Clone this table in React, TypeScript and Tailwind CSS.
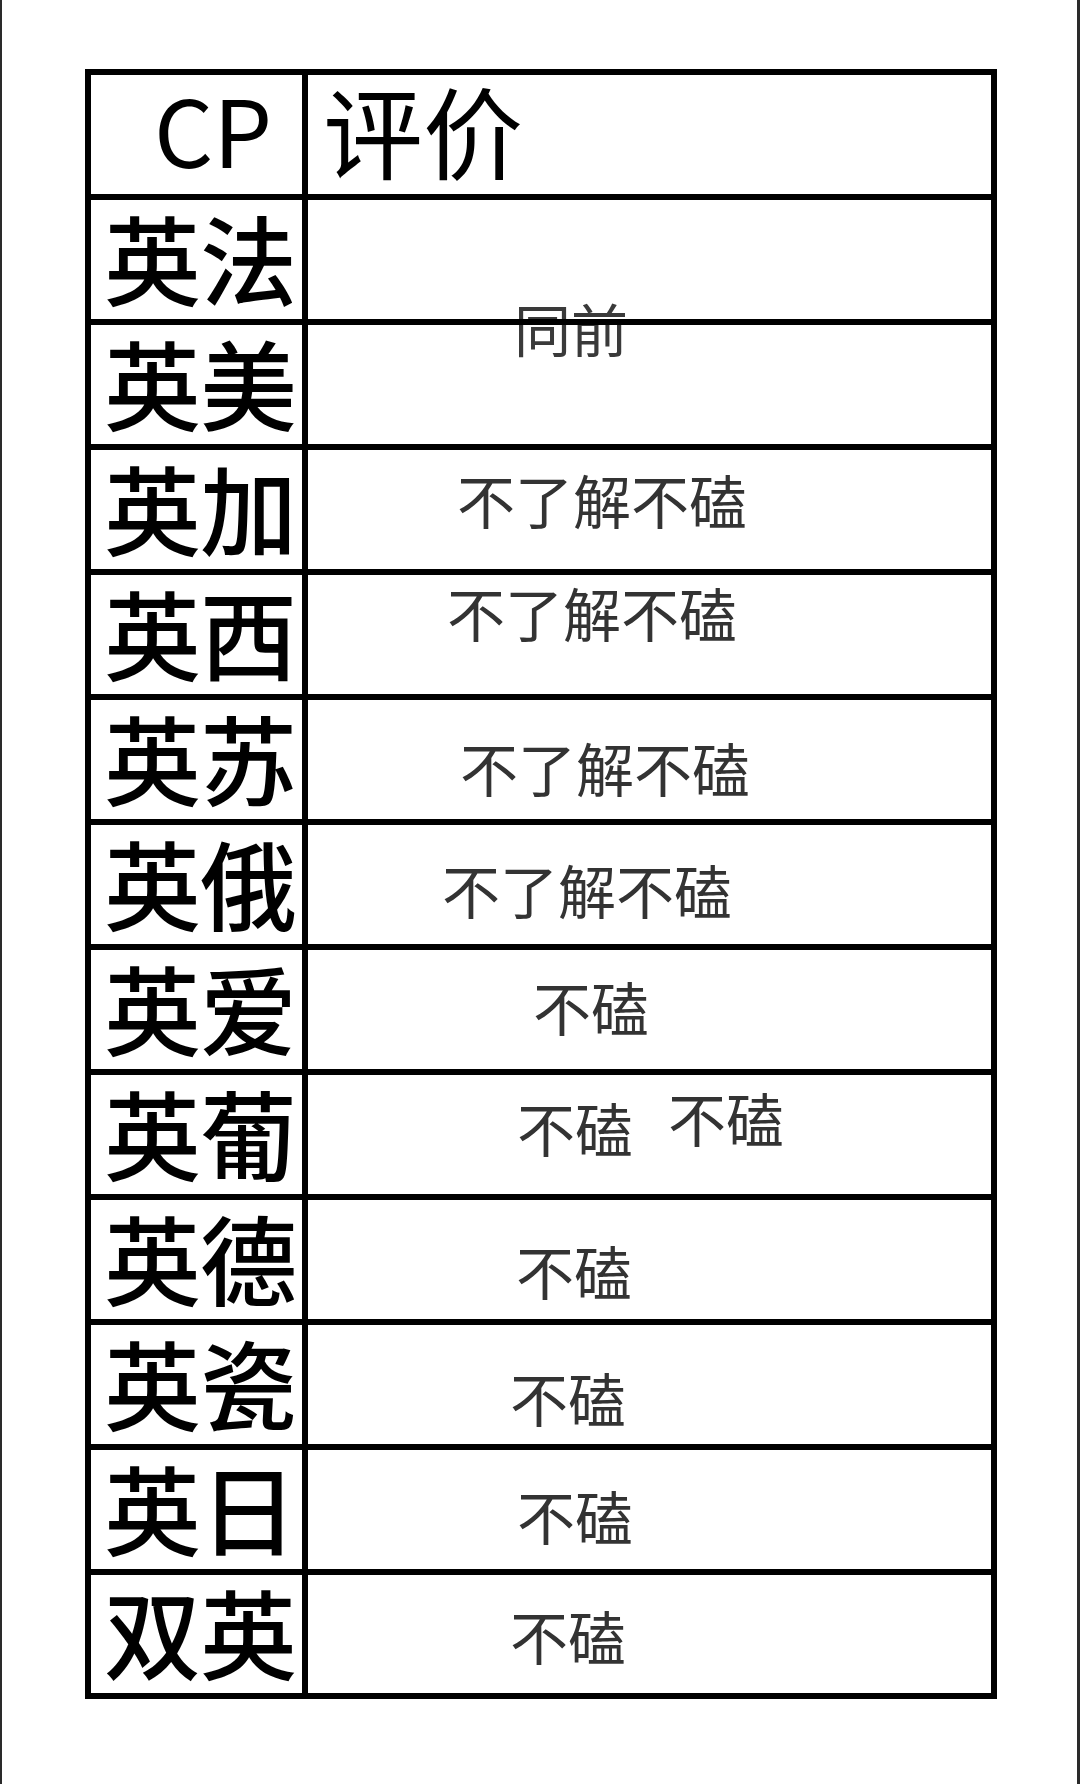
const cjk = "font-['Noto_Sans_CJK_SC','Noto_Sans_CJK_JP',sans-serif]"

type Row = {
  cp: string
  note?: string
  pad?: string
}

// padding per row, the notes sit wherever they were typed in the original
const rows: Row[] = [
  { cp: '英法' },
  { cp: '英美' },
  { cp: '英加', note: '不了解不磕', pad: 'pl-[149px] pt-[20px]' },
  { cp: '英西', note: '不了解不磕', pad: 'pl-[139px] pt-[8px]' },
  { cp: '英苏', note: '不了解不磕', pad: 'pl-[152px] pt-[38px]' },
  { cp: '英俄', note: '不了解不磕', pad: 'pl-[134px] pt-[35px]' },
  { cp: '英爱', note: '不磕', pad: 'pl-[225px] pt-[27px]' },
  { cp: '英葡' },
  { cp: '英德', note: '不磕', pad: 'pl-[208px] pt-[41px]' },
  { cp: '英瓷', note: '不磕', pad: 'pl-[202px] pt-[43px]' },
  { cp: '英日', note: '不磕', pad: 'pl-[209px] pt-[36px]' },
  { cp: '双英', note: '不磕', pad: 'pl-[202px] pt-[31px]' },
]

function Note({ text, className = '' }: { text: string; className?: string }) {
  return <span className={`block text-[58px] leading-none text-[#333] whitespace-nowrap ${className}`}>{text}</span>
}

export default function App() {
  return (
    <div className={`w-[1080px] min-h-[1784px] bg-white border-l-2 border-r-[3px] border-[#2a2a2a] pt-[69px] pl-[83px] ${cjk}`}>
      <div className="relative z-0 w-[912px] border-[6px] border-black bg-white flex flex-col">
        {/* header */}
        <div className="flex h-[125px] border-b-[6px] border-black">
          <div className="w-[217px] border-r-[6px] border-black pl-[63px] pt-[6px]">
            <span className="block text-[93px] leading-none text-black">CP</span>
          </div>
          <div className="flex-1 pl-[15px] pt-[4px]">
            <span className="block text-[100px] leading-none text-black">评价</span>
          </div>
        </div>

        {rows.map((r, i) => {
          const last = i === rows.length - 1
          return (
            <div key={r.cp} className={last ? 'flex h-[118px]' : 'flex h-[125px] border-b-[6px] border-black'}>
              <div className="w-[217px] border-r-[6px] border-black flex items-center pl-[13px] pb-[9px]">
                <span className="block text-[97px] leading-none font-medium tracking-[-1px] text-black whitespace-nowrap">{r.cp}</span>
              </div>
              {r.cp === '英葡' ? (
                <div className="flex-1 flex items-start pl-[209px]">
                  <Note text="不磕" className="mt-[23px]" />
                  <Note text="不磕" className="mt-[13px] ml-[35px]" />
                </div>
              ) : (
                <div className={`flex-1 flex items-start ${r.pad ?? ''}`}>
                  {r.note && <Note text={r.note} />}
                </div>
              )}
            </div>
          )
        })}

        {/* spans the 英法 / 英美 rows, the line runs over it */}
        <span className="absolute -z-10 left-[423px] top-[224px] block text-[57px] leading-none text-[#3a3a3a] whitespace-nowrap">同前</span>
      </div>
    </div>
  )
}
